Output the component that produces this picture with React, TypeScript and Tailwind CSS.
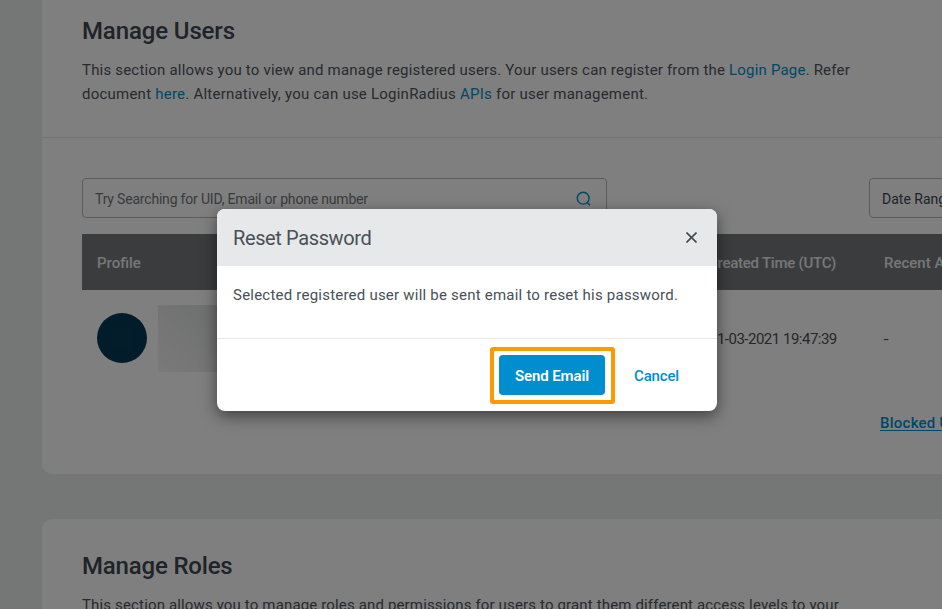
import React from "react";

function SectionIntro({ title, titleClass, children }: { title: string; titleClass: string; children: React.ReactNode }) {
  return (
    <div className="px-10">
      <h2 className={`whitespace-nowrap text-2xl font-medium leading-8 text-[#40474f] ${titleClass}`}>{title}</h2>
      <div className="mt-[11px] whitespace-nowrap text-[15px] leading-6 text-[#4f555c]">{children}</div>
    </div>
  );
}

function Link({ children }: { children: React.ReactNode }) {
  return <a className="text-[#008ecf]">{children}</a>;
}

function SearchIcon() {
  return (
    <svg width="15" height="15" viewBox="0 0 15 15" fill="none" stroke="#008ecf" strokeWidth="1.4">
      <circle cx="7.2" cy="7.2" r="5.9" />
      <path d="M10.8 11 14 14.2" />
    </svg>
  );
}

function ManageUsers() {
  return (
    <section className="h-[474px] w-[960px] shrink-0 rounded-b-[10px] bg-white">
      <div className="h-[138px] border-b border-[#e4e7e8] pt-[15px]">
        <SectionIntro title="Manage Users" titleClass="tracking-[-0.12px]">
          <p className="tracking-[0.19px]">
            This section allows you to view and manage registered users. Your users can register from the <Link>Login Page</Link>. Refer
          </p>
          <p className="tracking-[0.23px]">
            document <Link>here</Link>. Alternatively, you can use LoginRadius <Link>APIs</Link> for user management.
          </p>
        </SectionIntro>
      </div>
      <div className="flex flex-col pl-10 pt-10">
        <div className="flex justify-between">
          <div className="flex h-10 w-[525px] items-center justify-between rounded border border-[#b4b6b8] pl-3 pr-[15px] text-sm text-[#72777c]">
            <span className="pt-0.5 tracking-[-0.19px]">Try Searching for UID, Email or phone number</span>
            <SearchIcon />
          </div>
          <div className="flex h-10 w-[133px] items-center whitespace-nowrap rounded border border-[#b4b6b8] pl-3 pt-0.5 text-sm text-[#40474f]">Date Range</div>
        </div>
        <div className="mt-4 flex h-14 items-center whitespace-nowrap bg-[#77797c] pl-[15px] pt-0.5 text-[15px] font-medium text-[#edeeef]">
          <span className="w-[611px]">Profile</span>
          <span className="w-[176px] tracking-[-0.25px]">Created Time (UTC)</span>
          <span>Recent Activity</span>
        </div>
        <div className="flex h-[97px] items-center whitespace-nowrap pl-[15px] text-[15px] text-[#4b5057]">
          <div className="mb-px flex size-[50px] items-center justify-center rounded-full bg-[#043856]">
            <div className="size-5 bg-[#083b56]" />
          </div>
          <div className="ml-[11px] h-[67px] w-[61px] bg-linear-to-bl from-[#dcdedd] to-[#f4f4f4]" />
          <span className="ml-[490px] w-[175px] pt-0.5 tracking-[-0.5px]">31-03-2021 19:47:39</span>
          <span className="inline-block scale-x-125 pt-0.5">-</span>
        </div>
        <div className="ml-[798px] mt-6 whitespace-nowrap text-[15px] font-medium leading-6 tracking-[0.25px] text-[#008ecf] underline underline-offset-2">Blocked Users</div>
      </div>
    </section>
  );
}

function ManageRoles() {
  return (
    <section className="mt-[45px] h-[200px] w-[960px] shrink-0 rounded-t-[10px] bg-white pt-[31px]">
      <SectionIntro title="Manage Roles" titleClass="tracking-[-0.18px]">
        <p className="tracking-[0.15px]">This section allows you to manage roles and permissions for users to grant them different access levels to your</p>
      </SectionIntro>
    </section>
  );
}

function ResetDialog() {
  return (
    <div role="dialog" className="flex h-[202px] w-[500px] flex-col overflow-hidden rounded-lg bg-white text-[#495057] shadow-[0_5px_15px_rgba(0,0,0,0.5)]">
      <header className="flex h-[57px] items-center justify-between bg-[#e7e8ea] pl-4 pr-5">
        <h3 className="text-xl tracking-[-0.38px]">Reset Password</h3>
        <svg width="11" height="11" viewBox="0 0 11 11" stroke="#40474f" strokeWidth="1.6">
          <path d="M.5.5 10.5 10.5M10.5.5.5 10.5" />
        </svg>
      </header>
      <p className="h-[72px] whitespace-nowrap px-4 pt-[17px] text-[15px] leading-6 tracking-[0.22px]">Selected registered user will be sent email to reset his password.</p>
      <footer className="flex h-[73px] items-center justify-end border-t border-[#e7e8ea] pr-[38px] text-[15px] font-medium">
        <div className="flex h-[57px] w-[125px] items-center justify-start rounded-[3px] border-4 border-[#ff9900] pl-[5px]">
          <button className="h-10 w-[106px] whitespace-nowrap rounded bg-[#008ecf] pt-0.5 font-semibold tracking-[-0.12px] text-white">Send Email</button>
        </div>
        <button className="ml-[19px] pt-0.5 tracking-[-0.15px] text-[#008ecf]">Cancel</button>
      </footer>
    </div>
  );
}

export default function App() {
  return (
    <div className="relative h-[609px] w-[942px] overflow-hidden bg-[#e8eeec] font-['Roboto',sans-serif]">
      <main className="flex h-full flex-col overflow-hidden pl-[42px]">
        <ManageUsers />
        <ManageRoles />
      </main>
      <div className="absolute inset-0 flex items-start bg-black/50 pl-[217px] pt-[209px]">
        <ResetDialog />
      </div>
    </div>
  );
}
